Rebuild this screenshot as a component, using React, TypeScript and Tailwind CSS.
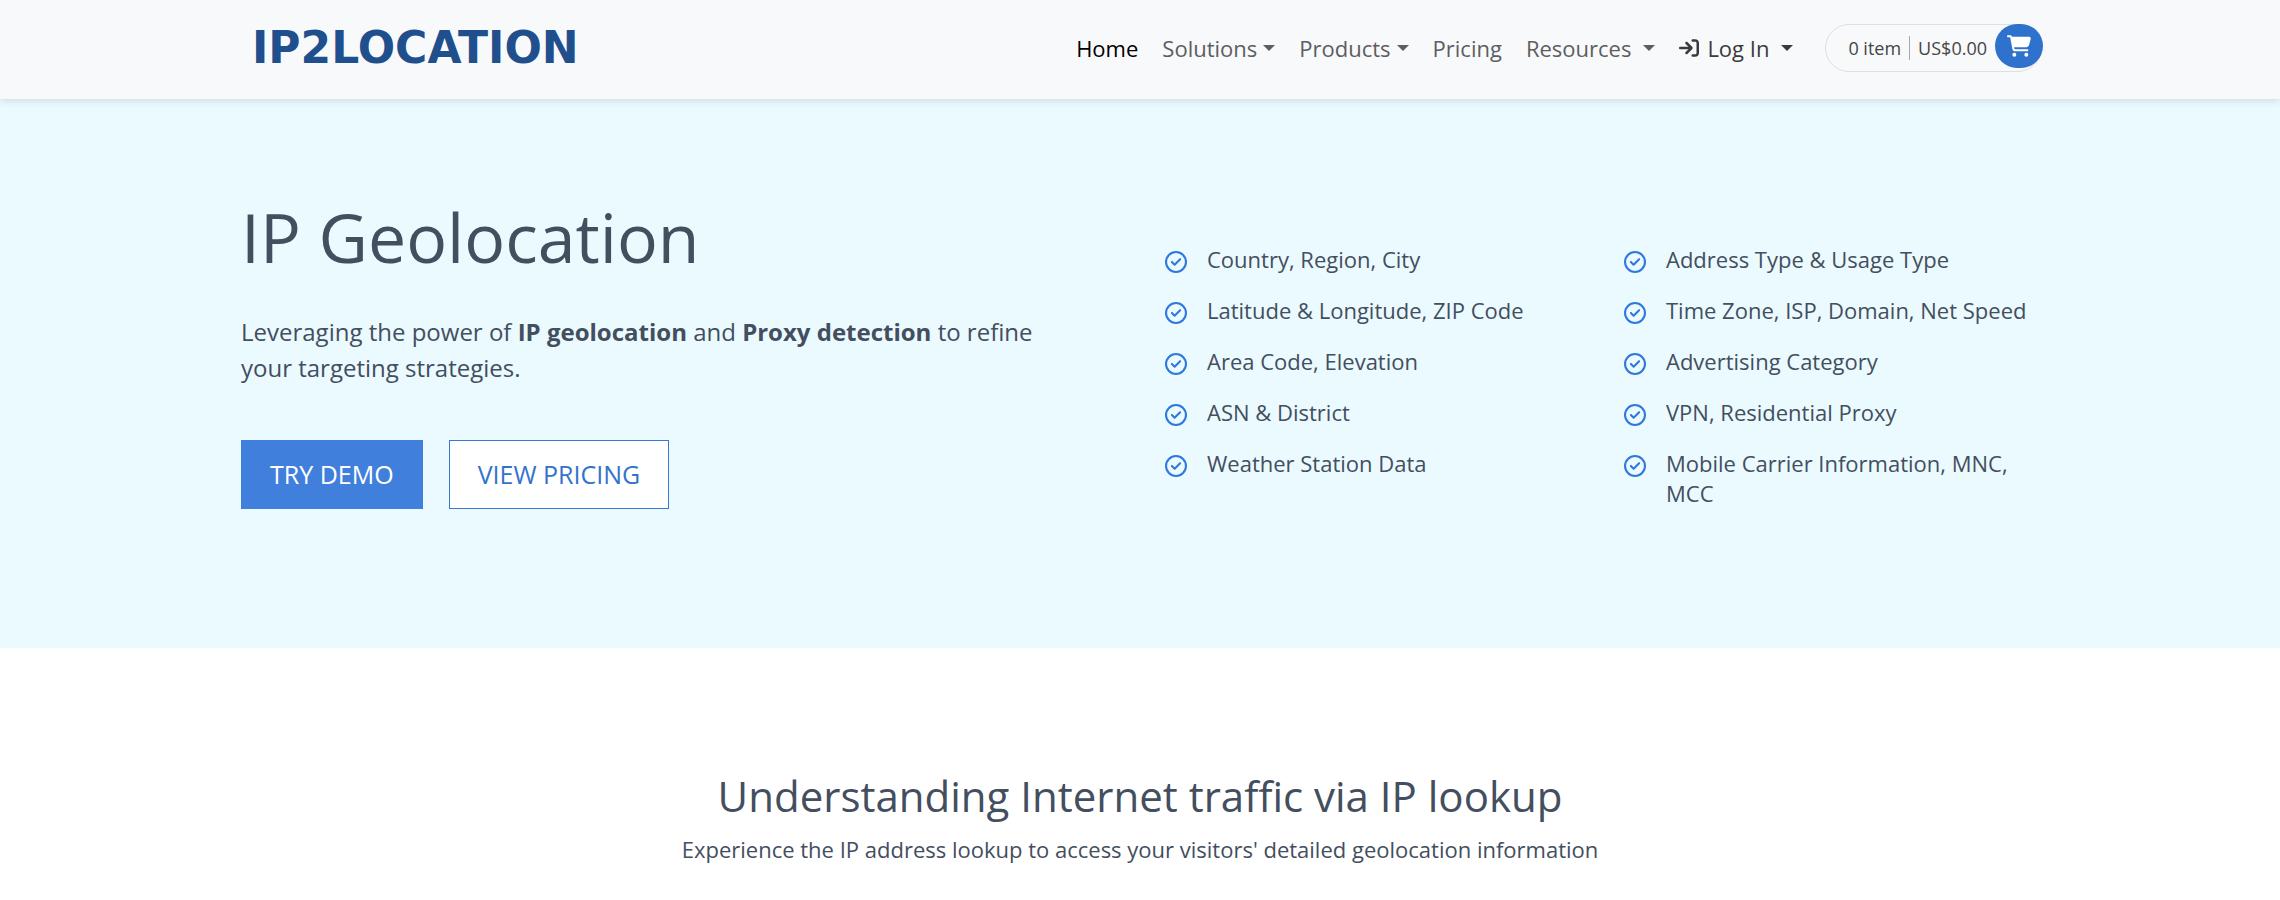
import { FaArrowRightToBracket, FaCartShopping, FaRegCircleCheck } from 'react-icons/fa6';

type NavItem = {
  label: string;
  active?: boolean;
  dropdown?: 'tight' | 'wide';
};

const navItems: NavItem[] = [
  { label: 'Home', active: true },
  { label: 'Solutions', dropdown: 'tight' },
  { label: 'Products', dropdown: 'tight' },
  { label: 'Pricing' },
  { label: 'Resources', dropdown: 'wide' },
];

const featureColumns: string[][] = [
  [
    'Country, Region, City',
    'Latitude & Longitude, ZIP Code',
    'Area Code, Elevation',
    'ASN & District',
    'Weather Station Data',
  ],
  [
    'Address Type & Usage Type',
    'Time Zone, ISP, Domain, Net Speed',
    'Advertising Category',
    'VPN, Residential Proxy',
    'Mobile Carrier Information, MNC, MCC',
  ],
];

function Caret() {
  return (
    <span className="inline-block border-x-6 border-t-6 border-x-transparent border-t-current" />
  );
}

function Header() {
  return (
    <header className="relative bg-[#f8f9fb] shadow-[0_2px_8px_rgba(0,0,0,0.12)]">
      <div className="mx-auto flex max-w-[1836px] items-center justify-between px-4 pt-6 pb-[27px]">
        <a
          href="#"
          className="pl-3.5 font-['DejaVu_Sans',sans-serif] text-[44px] leading-[48px] font-bold text-[#1f4f8c]"
        >
          IP2LOCATION
        </a>
        <div className="flex items-center">
          <nav className="flex items-center gap-6 text-[22px] leading-8 text-[#5d5e60]">
            {navItems.map((item) => (
              <a
                key={item.label}
                href="#"
                className={`flex items-center ${item.dropdown === 'wide' ? 'gap-3' : 'gap-1.5'} ${item.active ? 'text-black' : ''}`}
              >
                {item.label}
                {item.dropdown && <Caret />}
              </a>
            ))}
            <a href="#" className="flex items-center gap-3 text-[#3a3b3d]">
              <span className="flex items-center gap-2">
                <FaArrowRightToBracket className="size-5" />
                Log In
              </span>
              <Caret />
            </a>
          </nav>
          <a
            href="#"
            className="ml-8 flex h-12 items-start rounded-full border border-[#dddfe2] pl-[22px] text-lg text-[#444547]"
          >
            <span className="flex h-full items-center">
              <span className="border-r border-[#a9aaac] pr-2 leading-6">0 item</span>
              <span className="px-2 leading-6">US$0.00</span>
            </span>
            <span className="-mt-px -mr-0.5 flex h-11 w-12 items-center justify-center rounded-full bg-[#2f72ce] text-white">
              <FaCartShopping className="size-6" />
            </span>
          </a>
        </div>
      </div>
    </header>
  );
}

function Hero() {
  return (
    <section className="bg-[#ebfaff] pt-[92px] pb-[139px]">
      <div className="mx-auto grid max-w-[1836px] grid-cols-2">
        <div className="pr-16 pl-[19px]">
          <h1 className="text-[68px] leading-[92px]">IP Geolocation</h1>
          <p className="mt-[31px] text-2xl leading-9">
            Leveraging the power of <b>IP geolocation</b> and <b>Proxy detection</b> to refine your
            targeting strategies.
          </p>
          <div className="mt-[54px] flex gap-[26px] text-[25px] leading-[35px]">
            <button className="border border-[#407fdb] bg-[#407fdb] px-7 py-4 text-white">
              TRY DEMO
            </button>
            <button className="border border-[#3878d2] bg-white px-7 py-4 text-[#3373cc]">
              VIEW PRICING
            </button>
          </div>
        </div>
        <div className="grid grid-cols-2 pt-[53px]">
          {featureColumns.map((features, index) => (
            <ul key={index} className="flex flex-col gap-[21px] px-[19px] text-[22px] leading-[30px]">
              {features.map((feature) => (
                <li key={feature} className="flex items-start gap-5 pl-1.5">
                  <FaRegCircleCheck className="mt-[7px] size-[22px] shrink-0 text-[#2f78dc]" />
                  <span>{feature}</span>
                </li>
              ))}
            </ul>
          ))}
        </div>
      </div>
    </section>
  );
}

export default function App() {
  return (
    <div className="min-h-screen bg-white font-['Open_Sans',sans-serif] text-[#434e5e]">
      <Header />
      <main>
        <Hero />
        <section className="px-4 pt-[118px] text-center">
          <h2 className="text-[42px] leading-[60px]">Understanding Internet traffic via IP lookup</h2>
          <p className="mt-2 text-[22px] leading-[30px]">
            Experience the IP address lookup to access your visitors' detailed geolocation
            information
          </p>
        </section>
      </main>
    </div>
  );
}
